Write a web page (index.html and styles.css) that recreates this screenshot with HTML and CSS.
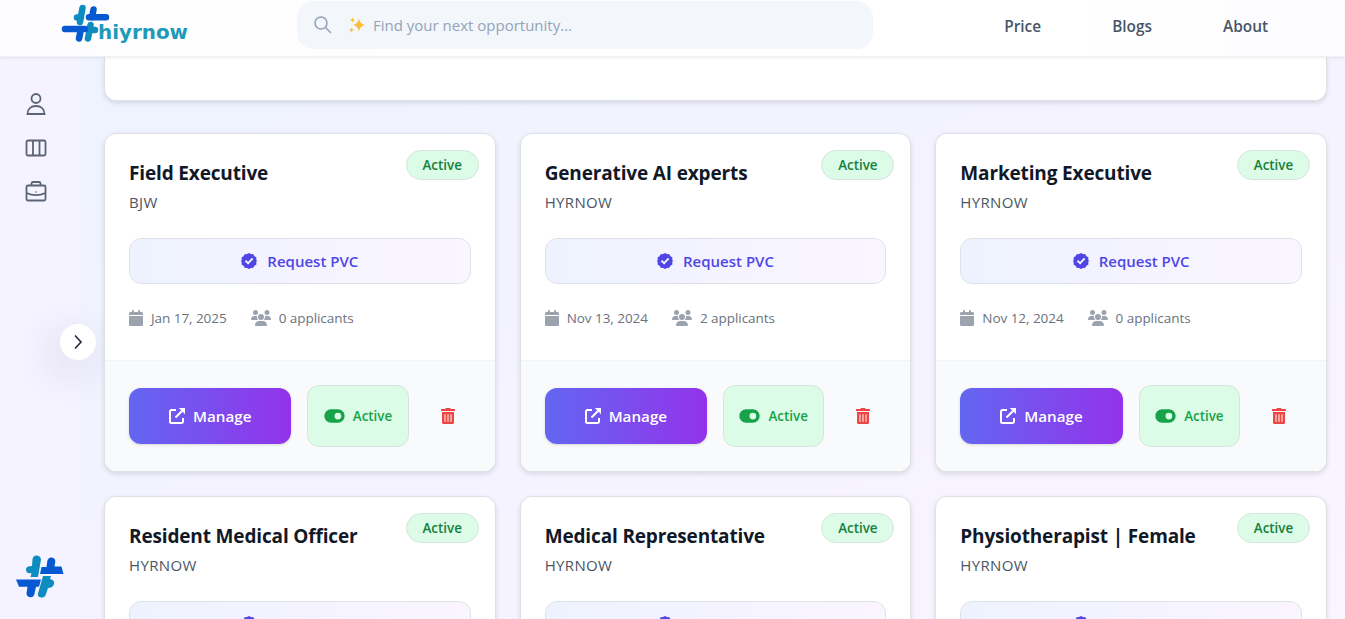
FILE: index.html
```
<!DOCTYPE html>
<html lang="en">
<head>
    <meta charset="UTF-8">
    <meta name="viewport" content="width=device-width, initial-scale=1.0">
    <title>hiyrnow - Jobs</title>
    <link rel="stylesheet" href="styles.css">
</head>
<body>
    <!-- icon sprite -->
    <svg class="sprite" aria-hidden="true">
        <symbol id="i-verified" viewBox="0 0 16 16">
            <path d="M8 0l2 1.1 2.3.1 1.2 2L15.400 4.600 15.300 7 16 8l-.7 1 .1 2.400-1.900 1.400-1.200 2-2.300.1L8 16l-2-1.100-2.300-.1-1.200-2L.6 11.400.7 9 0 8l.7-1L.6 4.600l1.900-1.400 1.200-2L6 1.100z"/>
            <path d="M5 8.200l2.100 2L11.100 6" fill="none" stroke="#f1f2ff" stroke-width="1.900" stroke-linecap="round"/>
        </symbol>
        <symbol id="i-calendar" viewBox="0 0 448 512">
            <path d="M96 32V64H48C21.500 64 0 85.500 0 112v48H448V112c0-26.500-21.500-48-48-48H352V32c0-17.700-14.300-32-32-32s-32 14.300-32 32V64H160V32c0-17.700-14.300-32-32-32S96 14.300 96 32zM448 192H0V464c0 26.500 21.500 48 48 48H400c26.500 0 48-21.500 48-48V192z"/>
        </symbol>
        <symbol id="i-users" viewBox="0 0 640 512">
            <path d="M144 0a80 80 0 1 1 0 160A80 80 0 1 1 144 0zM512 0a80 80 0 1 1 0 160A80 80 0 1 1 512 0zM0 298.700C0 239.800 47.800 192 106.700 192h42.700c15.900 0 31 3.500 44.600 9.700c-1.300 7.200-1.900 14.700-1.900 22.300c0 38.200 16.800 72.500 43.300 96H21.300C9.600 320 0 310.400 0 298.700zM405.300 320c26-23.500 42.600-57.800 42.600-96c0-7.600-.7-15-1.900-22.300c13.600-6.300 28.700-9.700 44.600-9.700h42.700C592.200 192 640 239.800 640 298.700c0 11.800-9.600 21.300-21.300 21.300H405.300zM224 224a96 96 0 1 1 192 0 96 96 0 1 1 -192 0zM128 485.300C128 411.700 187.700 352 261.300 352H378.700C452.300 352 512 411.700 512 485.300c0 14.700-11.900 26.700-26.700 26.700H154.700c-14.700 0-26.700-11.900-26.700-26.700z"/>
        </symbol>
        <symbol id="i-open" viewBox="0 0 16 16">
            <path d="M7 2H2.500A1.500 1.500 0 0 0 1 3.500v10A1.500 1.500 0 0 0 2.500 15h10a1.500 1.500 0 0 0 1.500-1.500V10M6.500 9.500L13 3" fill="none" stroke="currentColor" stroke-width="2"/>
            <path d="M9.700 0H16v6.300l-2-2-2.500-2.500z"/>
        </symbol>
        <symbol id="i-toggle" viewBox="0 0 576 512">
            <path d="M192 64C86 64 0 150 0 256S86 448 192 448H384c106 0 192-86 192-192s-86-192-192-192H192zm192 96a96 96 0 1 1 0 192 96 96 0 1 1 0-192z"/>
        </symbol>
        <symbol id="i-trash" viewBox="0 0 448 512">
            <path d="M32 464a48 48 0 0 0 48 48h288a48 48 0 0 0 48-48V128H32zm272-256a16 16 0 0 1 32 0v224a16 16 0 0 1-32 0zm-96 0a16 16 0 0 1 32 0v224a16 16 0 0 1-32 0zm-96 0a16 16 0 0 1 32 0v224a16 16 0 0 1-32 0zM432 32H312l-9.400-18.700A24 24 0 0 0 281.100 0H166.800a23.720 23.720 0 0 0-21.400 13.300L136 32H16A16 16 0 0 0 0 48v32a16 16 0 0 0 16 16h416a16 16 0 0 0 16-16V48a16 16 0 0 0-16-16z"/>
        </symbol>
    </svg>

    <header class="navbar">
        <a class="brand" href="#">
            <svg width="128" height="44" viewBox="0 0 128 44">
                <g stroke-linecap="round" stroke-width="6.500" fill="none">
                    <path d="M21.500 5L19 19M16 14.500h4M29.500 22L27 35.500M30 27h4" stroke="#0d8cc0"/>
                    <path d="M32.500 6.500l-1.500 8M28 14.300h17M4 26H24M20 26l-2 9.500" stroke="#0659d0"/>
                </g>
                <text class="brand-text" x="37" y="36" textLength="90" lengthAdjust="spacingAndGlyphs">hiyrnow</text>
            </svg>
        </a>
        <div class="search">
            <svg class="search-icon" viewBox="0 0 18 18"><circle cx="7" cy="7" r="6"/><path d="M11.300 11.300l5.700 5.700"/></svg>
            <svg class="sparkle" viewBox="0 0 16 16"><path d="M10 1c.6 4 2 5.800 6 7-4 1.200-5.400 3-6 7-.6-4-2-5.800-6-7 4-1.200 5.400-3 6-7zM3.500 0c.3 2 .8 2.500 2.500 3-1.700.5-2.200 1-2.500 3C3.200 4 2.700 3.500 1 3c1.700-.5 2.200-1 2.500-3zM2.500 10c.3 2 .8 2.500 2.500 3-1.700.5-2.200 1-2.500 3-.3-2-.8-2.500-2.500-3 1.700-.5 2.200-1 2.500-3z"/></svg>
            <input type="text" placeholder="Find your next opportunity...">
        </div>
        <nav class="nav-links">
            <a href="#">Price</a>
            <a href="#">Blogs</a>
            <a href="#">About</a>
        </nav>
    </header>

    <div class="layout">
        <aside class="sidebar">
            <div class="side-menu">
                <svg viewBox="0 0 24 24"><circle cx="12" cy="6.500" r="4.500"/><path d="M3.500 22c0-5 3.500-8 8.500-8s8.500 3 8.500 8z"/></svg>
                <svg viewBox="0 0 24 24"><rect x="2.500" y="4.500" width="19" height="15" rx="1.500"/><path d="M9 4.500v15M15.500 4.500v15"/></svg>
                <svg viewBox="0 0 24 24"><rect x="2.500" y="6.500" width="19" height="15" rx="1.500"/><path d="M7.500 6.500V4.500A1.500 1.500 0 0 1 9 3h6a1.500 1.500 0 0 1 1.500 1.500v2M2.500 14c6 2.700 13 2.700 19 0M12 12.500v1"/></svg>
            </div>
            <svg class="side-logo" viewBox="0 0 48 44">
                <path d="M16.500 4q1-4 4.500-3.500t4 4L22 22H14.500l1-4q-5 1-5.500-3t6-4zM27 21h8l-1 3q5 1 4 5t-6 4l-2 6q-1 4-5 3.500t-3-4z" fill="#0d8cc0"/>
                <path d="M24 19l1.500-7h5l.8-6q1-4 4.500-3.500t3.500 4l-.8 5h7l2 7.500zM0 24.500h25l-2 7.300h-3l-1.500 7q-1 4-4.500 3.500t-3.500-4l1-6.500H3z" fill="#0659d0"/>
            </svg>
            <button class="side-toggle" aria-label="Expand"><svg viewBox="0 0 16 16"><path d="M5 1.500L11 8l-6 6.500"/></svg></button>
        </aside>

        <main class="content">
            <section class="panel"></section>
            <div class="jobs" id="jobs"></div>
        </main>
    </div>

    <script>
        const jobs = [
            { title: 'Field Executive', company: 'BJW', date: 'Jan 17, 2025', applicants: 0 },
            { title: 'Generative AI experts', company: 'HYRNOW', date: 'Nov 13, 2024', applicants: 2 },
            { title: 'Marketing Executive', company: 'HYRNOW', date: 'Nov 12, 2024', applicants: 0 },
            { title: 'Resident Medical Officer', company: 'HYRNOW', date: 'Nov 12, 2024', applicants: 0 },
            { title: 'Medical Representative', company: 'HYRNOW', date: 'Nov 12, 2024', applicants: 0 },
            { title: 'Physiotherapist | Female', company: 'HYRNOW', date: 'Nov 12, 2024', applicants: 0 }
        ];

        function icon(name) {
            return `<svg class="icon icon-${name}"><use href="#i-${name}"/></svg>`;
        }

        document.getElementById('jobs').innerHTML = jobs.map(job => `
            <article class="job-card">
                <span class="badge">Active</span>
                <div class="job-body">
                    <h3 class="job-title">${job.title}</h3>
                    <p class="job-company">${job.company}</p>
                    <button class="btn-pvc">${icon('verified')}<span>Request PVC</span></button>
                    <div class="job-meta">
                        <span class="meta-date">${icon('calendar')}${job.date}</span>
                        <span class="meta-users">${icon('users')}${job.applicants} applicants</span>
                    </div>
                </div>
                <div class="job-footer">
                    <button class="btn-manage">${icon('open')}<span>Manage</span></button>
                    <button class="btn-status">${icon('toggle')}<span>Active</span></button>
                    <button class="btn-delete" aria-label="Delete">${icon('trash')}</button>
                </div>
            </article>`).join('');
    </script>
</body>
</html>
```
FILE: styles.css
```
* {
    box-sizing: border-box;
}

body {
    margin: 0;
    height: 100vh;
    overflow: hidden;
    display: flex;
    flex-direction: column;
    font-family: "Open Sans", "Noto Sans", sans-serif;
    color: #111827;
    background: linear-gradient(to bottom right, #edf3ff, #f4f3ff 50%, #faf5ff);
}

button {
    font-family: inherit;
    cursor: pointer;
}

.sprite {
    display: none;
}

.icon {
    flex: none;
    fill: currentColor;
}

/* navbar */
.navbar {
    position: relative;
    z-index: 2;
    flex: none;
    display: flex;
    align-items: flex-start;
    height: 57px;
    padding-left: 61px;
    background: linear-gradient(to right, #fdfdff, #fff 40%, #fff 80%, #fcfcff);
    border-bottom: 1px solid #f0f0f5;
    box-shadow: 0 1px 3px rgba(0, 0, 0, 0.08);
}

.brand {
    width: 236px;
    height: 48px;
    padding-top: 3px;
}

.brand-text {
    font-family: "DejaVu Sans", sans-serif;
    font-weight: 700;
    font-size: 20px;
    fill: #2199b8;
}

.search {
    display: flex;
    align-items: center;
    width: 576px;
    height: 48px;
    margin-top: 1px;
    padding-left: 17px;
    border-radius: 16px;
    background: #f3f7fb;
}

.search-icon {
    width: 18px;
    height: 18px;
    margin-right: 17px;
    fill: none;
    stroke: #94a3b8;
    stroke-width: 1.6;
}

.sparkle {
    width: 16px;
    height: 16px;
    margin-right: 8px;
    fill: #fbbf36;
}

.search input {
    flex: 1;
    padding: 0;
    border: none;
    outline: none;
    background: transparent;
    font-family: inherit;
    font-size: 15px;
}

.search input::placeholder {
    color: #94a3b8;
}

.nav-links {
    display: flex;
    flex: 1;
    justify-content: flex-end;
    gap: 71px;
    padding: 14px 77px 0 0;
}

.nav-links a {
    color: #475569;
    font-size: 15.4px;
    font-weight: 600;
    line-height: 25px;
    text-decoration: none;
}

.layout {
    display: flex;
    flex: 1;
    min-height: 0;
}

/* sidebar */
.sidebar {
    position: relative;
    flex: none;
    display: flex;
    flex-direction: column;
    justify-content: space-between;
    width: 80px;
    padding: 35px 16px 20px;
    background: #f5f3ff;
}

.side-menu {
    display: flex;
    flex-direction: column;
    gap: 19.5px;
    padding-left: 8px;
}

.side-menu svg {
    width: 24px;
    height: 24px;
    fill: none;
    stroke: #5b6475;
    stroke-width: 1.8;
}

.side-logo {
    width: 48px;
    height: 44px;
}

.side-toggle {
    position: absolute;
    top: 267px;
    right: -16px;
    display: flex;
    align-items: center;
    justify-content: center;
    width: 36px;
    height: 36px;
    padding: 0;
    border: none;
    border-radius: 50%;
    background: #fff;
    box-shadow: -6px 12px 44px rgba(40, 30, 80, 0.16);
}

.side-toggle svg {
    width: 16px;
    height: 16px;
    fill: none;
    stroke: #1e293b;
    stroke-width: 1.6;
}

/* job list */
.content {
    flex: 1;
    overflow: hidden;
    padding: 0 18px 0 24px;
}

.panel {
    height: 44px;
    margin-bottom: 32px;
    border: 1px solid #dee2e6;
    border-top: none;
    border-radius: 0 0 12px 12px;
    background: #fff;
    box-shadow: 0 2px 5px rgba(0, 0, 0, 0.12);
}

.jobs {
    display: grid;
    grid-template-columns: repeat(3, 1fr);
    gap: 24px;
}

.job-card {
    position: relative;
    overflow: hidden;
    border: 1px solid #dee2e6;
    border-radius: 12px;
    background: #fff;
    box-shadow: 0 2px 5px rgba(0, 0, 0, 0.12);
}

.badge {
    position: absolute;
    top: 16px;
    right: 16px;
    width: 73px;
    height: 30px;
    border: 1px solid #d5e5de;
    border-radius: 15px;
    background: #dcfce7;
    color: #15803d;
    font-size: 13.4px;
    font-weight: 600;
    line-height: 28px;
    text-align: center;
}

.job-body {
    padding: 25px 24px 32px;
}

.job-title {
    margin: 0;
    font-size: 19px;
    font-weight: 700;
    letter-spacing: -0.15px;
    line-height: 28px;
}

.job-company {
    margin: 3px 0 24px;
    color: #4b5563;
    font-size: 15px;
    letter-spacing: 0.35px;
    line-height: 24px;
}

.btn-pvc {
    display: flex;
    align-items: center;
    justify-content: center;
    gap: 10px;
    width: 100%;
    height: 46px;
    margin-bottom: 24px;
    border: 1px solid #dee2e6;
    border-radius: 12px;
    background: linear-gradient(to right, #eef2ff, #faf5ff);
    color: #4f46e5;
    font-size: 15px;
    font-weight: 550;
}

.icon-verified {
    width: 16px;
    height: 16px;
}

.job-meta {
    display: flex;
    gap: 24px;
    color: #6b7280;
    font-size: 13.5px;
    letter-spacing: -0.05px;
    line-height: 20px;
}

.job-meta span {
    display: flex;
    align-items: center;
    gap: 8px;
}

.job-meta .icon {
    color: #9ca3af;
    height: 16px;
}

.icon-calendar {
    width: 14px;
}

.icon-users {
    width: 20px;
}

.job-footer {
    display: flex;
    align-items: center;
    gap: 16px;
    height: 111px;
    padding: 0 24px;
    border-top: 1px solid #f3f4f6;
    background: #f9fafb;
}

.btn-manage {
    display: flex;
    flex: 1;
    align-items: center;
    justify-content: center;
    gap: 8px;
    height: 56px;
    border: none;
    border-radius: 12px;
    background: linear-gradient(to right, #6366f1, #9333ea);
    box-shadow: 0 1px 3px rgba(0, 0, 0, 0.15);
    color: #fff;
    font-size: 15.2px;
    font-weight: 600;
}

.icon-open {
    width: 16px;
    height: 16px;
}

.btn-status {
    display: flex;
    align-items: center;
    justify-content: center;
    gap: 8px;
    width: 101.3px;
    height: 62px;
    padding: 0;
    border: 1px solid #d5e5de;
    border-radius: 12px;
    background: #dcfce7;
    color: #16a34a;
    font-size: 13.4px;
    font-weight: 550;
}

.icon-toggle {
    width: 21px;
    height: 18px;
}

.btn-delete {
    display: flex;
    align-items: center;
    justify-content: center;
    width: 46px;
    height: 48px;
    padding: 0;
    border: none;
    background: transparent;
    color: #ef4444;
}

.icon-trash {
    width: 14px;
    height: 16px;
}
```
